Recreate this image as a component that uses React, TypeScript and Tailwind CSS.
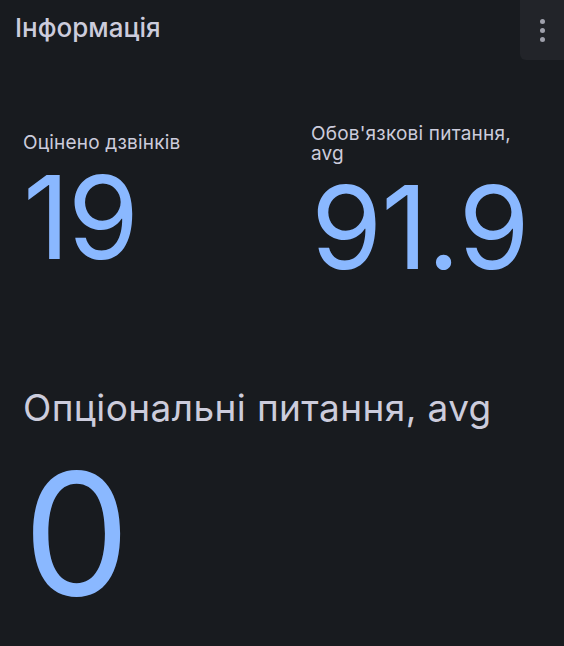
export default function App() {
  const font = { fontFamily: "Inter, 'Noto Sans', sans-serif" };
  return (
    <div className="w-[564px] h-[646px] bg-[#181b1f] overflow-hidden flex flex-col" style={font}>
      {/* Header */}
      <div className="flex h-[60px] items-start justify-between">
        <h2 className="pl-[15px] pt-[12px] text-[26px] font-medium leading-[32px] text-[#ccccdc]">Інформація</h2>
        <button className="flex h-[60px] w-[44px] flex-col items-center justify-center gap-[4px] rounded-bl-md bg-[#222429]">
          <span className="h-[5px] w-[5px] rounded-full bg-[#9fa0ab]" />
          <span className="h-[5px] w-[5px] rounded-full bg-[#9fa0ab]" />
          <span className="h-[5px] w-[5px] rounded-full bg-[#9fa0ab]" />
        </button>
      </div>

      {/* Top row */}
      <div className="grid h-[270px] grid-cols-[288px_276px]">
        <div className="flex flex-col justify-center pl-[23px] pt-[18px]">
          <div className="text-[19px] leading-[22px] tracking-[0.2px] text-[#ccccdc]">Оцінено дзвінків</div>
          <div className="mt-[6px] text-[115px] leading-[116px] font-normal tracking-[-2px] text-[#8ab8ff]">19</div>
        </div>
        <div className="flex flex-col justify-center pl-[23px] pt-[20px]">
          <div className="text-[19px] leading-[20px] tracking-[0.2px] text-[#ccccdc]">
            Обов'язкові питання,
            <br />
            avg
          </div>
          <div className="mt-[6px] text-[115px] leading-[116px] font-normal tracking-[-1px] text-[#8ab8ff]">91.9</div>
        </div>
      </div>

      {/* Bottom row */}
      <div className="flex flex-1 flex-col justify-center pl-[23px] pt-[27px]">
        <div className="text-[37px] leading-[44px] tracking-[0.4px] text-[#ccccdc]">Опціональні питання, avg</div>
        <div className="mt-[19px] text-[170px] leading-[168px] font-normal text-[#8ab8ff]">0</div>
      </div>
    </div>
  );
}
